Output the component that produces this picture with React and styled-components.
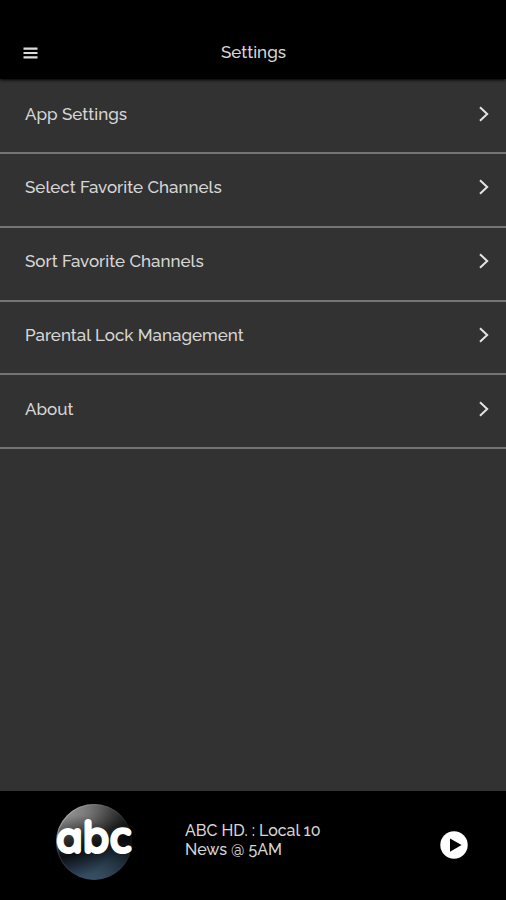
import React from 'react';
import styled, { createGlobalStyle } from 'styled-components';

const GlobalStyle = createGlobalStyle`
  * {
    box-sizing: border-box;
  }

  body {
    margin: 0;
    background-color: #323232;
    font-family: Raleway, Lato, sans-serif;
    font-weight: 500;
  }
`;

const Screen = styled.div`
  display: flex;
  flex-direction: column;
  height: 100vh;
  min-height: 900px;
  background-color: #323232;
  color: #d6d6d6;
  overflow: hidden;
`;

const Header = styled.header`
  display: grid;
  grid-template-columns: 60px 1fr 59px;
  align-items: center;
  height: 79px;
  padding-top: 25px;
  background-color: #000;
  box-shadow: 0 1px 3px #000;
`;

const MenuButton = styled.button`
  display: flex;
  padding: 1px 0 0 23px;
  border: 0;
  background: none;
  color: #dcdcdc;
`;

const Title = styled.h1`
  margin: 0;
  font-size: 17px;
  font-weight: 500;
  line-height: 20px;
  text-align: center;
`;

const List = styled.ul`
  flex: 1;
  margin: 0;
  padding: 0;
  list-style: none;
`;

const Row = styled.li`
  display: flex;
  align-items: center;
  justify-content: space-between;
  height: 73.75px;
  padding: 0 16px 5px 25px;
  border-bottom: 2px solid #747474;

  &:first-child {
    height: 75px;
    padding-bottom: 3px;
  }
`;

const Label = styled.span`
  font-size: 17px;
  line-height: 20px;
`;

const PlayerBar = styled.footer`
  display: grid;
  grid-template-columns: 185px 1fr 66px;
  align-items: center;
  height: 109px;
  padding-bottom: 8px;
  background-color: #000;
`;

const ChannelLogo = styled.svg`
  margin-left: 54px;
  overflow: visible;
`;

const LogoText = styled.text`
  font-family: Quicksand, Comfortaa, Lato, sans-serif;
  font-size: 44px;
  font-weight: 700;
  fill: #fff;
  stroke: #fff;
  stroke-width: 2px;
  stroke-linejoin: round;
`;

const NowPlaying = styled.div`
  padding-bottom: 3px;
  font-size: 16px;
  line-height: 19px;
`;

const Line = styled.div`
  letter-spacing: -0.02px;
`;

const PlayButton = styled.button`
  display: flex;
  padding: 6px 0 0;
  border: 0;
  background: none;
`;

const items = [
  'App Settings',
  'Select Favorite Channels',
  'Sort Favorite Channels',
  'Parental Lock Management',
  'About',
];

const MenuIcon = () => (
  <svg width="15" height="12" viewBox="0 0 15 12">
    <path d="M0.5 1.7H14.5M0.5 6H14.5M0.5 10.3H14.5" stroke="currentColor" strokeWidth="2.2" />
  </svg>
);

const Chevron = () => (
  <svg width="12" height="18" viewBox="0 0 12 18" fill="none">
    <path d="M2 2.2L9.2 9L2 15.8" stroke="#e4e4e4" strokeWidth="2" />
  </svg>
);

const PlayIcon = () => (
  <svg width="28" height="28" viewBox="0 0 28 28">
    <circle cx="14" cy="14" r="13.7" fill="#fff" />
    <path d="M10 7.5V20.8L21.6 14.1Z" fill="#000" />
  </svg>
);

const AbcLogo = () => (
  <ChannelLogo width="82" height="82" viewBox="0 0 82 82">
    <defs>
      <linearGradient id="ball" x1="0.3" y1="0" x2="0.6" y2="1">
        <stop offset="0" stopColor="#b0b0b0" />
        <stop offset="0.22" stopColor="#666" />
        <stop offset="0.4" stopColor="#2a2a2a" />
        <stop offset="0.58" stopColor="#0b0d0f" />
        <stop offset="0.72" stopColor="#1a2834" />
        <stop offset="1" stopColor="#46637d" />
      </linearGradient>
      <radialGradient id="shade" cx="0.3" cy="0.55" r="0.8">
        <stop offset="0.5" stopColor="#000" stopOpacity="0" />
        <stop offset="0.85" stopColor="#000" stopOpacity="0.5" />
        <stop offset="1" stopColor="#000" stopOpacity="0.8" />
      </radialGradient>
      <linearGradient id="rim" x1="0" y1="0" x2="0.7" y2="0.6">
        <stop offset="0" stopColor="#ddd" />
        <stop offset="0.5" stopColor="#777" stopOpacity="0.3" />
        <stop offset="1" stopColor="#456" stopOpacity="0.1" />
      </linearGradient>
    </defs>
    <circle cx="40" cy="41" r="38" fill="url(#ball)" />
    <circle cx="40" cy="41" r="38" fill="url(#shade)" />
    <circle cx="40" cy="41" r="37.3" fill="none" stroke="url(#rim)" strokeWidth="1.2" />
    <LogoText x="2" y="52" textLength="75.5" lengthAdjust="spacingAndGlyphs">
      abc
    </LogoText>
  </ChannelLogo>
);

const App = () => {
  return (
    <>
      <GlobalStyle />
      <Screen>
        <Header>
          <MenuButton aria-label="Menu">
            <MenuIcon />
          </MenuButton>
          <Title>Settings</Title>
        </Header>
        <List>
          {items.map((item) => (
            <Row key={item}>
              <Label>{item}</Label>
              <Chevron />
            </Row>
          ))}
        </List>
        <PlayerBar>
          <AbcLogo />
          <NowPlaying>
            <Line>ABC HD. : Local 10</Line>
            <Line>News @ 5AM</Line>
          </NowPlaying>
          <PlayButton aria-label="Play">
            <PlayIcon />
          </PlayButton>
        </PlayerBar>
      </Screen>
    </>
  );
};

export default App;
